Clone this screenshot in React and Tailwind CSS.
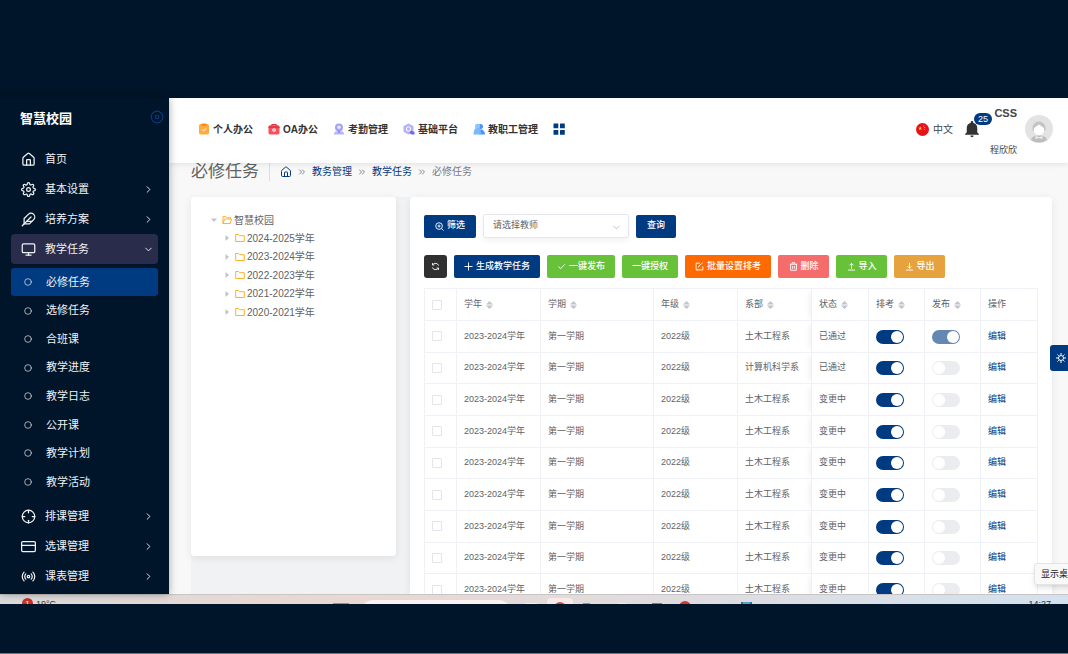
import { useState } from "react";
import { House, ChevronsRight } from "lucide-react";
import {
  FiSettings,
  FiFeather,
  FiMonitor,
  FiCrosshair,
  FiCreditCard,
  FiRadio,
  FiDisc,
  FiCircle,
  FiChevronRight,
  FiChevronDown,
} from "react-icons/fi";
import { IoMdNotifications } from "react-icons/io";

const subItems = [
  "必修任务",
  "选修任务",
  "合班课",
  "教学进度",
  "教学日志",
  "公开课",
  "教学计划",
  "教学活动",
];

const years = ["2024-2025", "2023-2024", "2022-2023", "2021-2022", "2020-2021"];

const columns = [
  { label: "学年", sortable: true },
  { label: "学期", sortable: true },
  { label: "年级", sortable: true },
  { label: "系部", sortable: true },
  { label: "状态", sortable: true },
  { label: "排考", sortable: true },
  { label: "发布", sortable: true },
  { label: "操作", sortable: false },
];

const initialRows = [
  { id: 1, dept: "土木工程系", status: "已通过", exam: true, published: true },
  { id: 2, dept: "计算机科学系", status: "已通过", exam: true, published: false },
  { id: 3, dept: "土木工程系", status: "变更中", exam: true, published: false },
  { id: 4, dept: "土木工程系", status: "变更中", exam: true, published: false },
  { id: 5, dept: "土木工程系", status: "变更中", exam: true, published: false },
  { id: 6, dept: "土木工程系", status: "变更中", exam: true, published: false },
  { id: 7, dept: "土木工程系", status: "变更中", exam: true, published: false },
  { id: 8, dept: "土木工程系", status: "变更中", exam: true, published: false },
  { id: 9, dept: "土木工程系", status: "变更中", exam: true, published: false },
];

// 10x10 line icons used inside the toolbar buttons
function LineIcon({ children, className = "size-[9px]" }) {
  return (
    <svg
      viewBox="0 0 10 10"
      fill="none"
      stroke="currentColor"
      strokeWidth="1"
      className={`${className} shrink-0`}
      aria-hidden="true"
    >
      {children}
    </svg>
  );
}

function MenuItem({ icon: Icon, label, arrow = true, active = false }) {
  const Arrow = active ? FiChevronDown : FiChevronRight;
  return (
    <a
      href="#"
      className={`flex h-[30px] items-center rounded pl-[10px] pr-1 ${
        active ? "bg-[#2a2c4b]" : ""
      }`}
    >
      <Icon size={15} strokeWidth={2} className="shrink-0" />
      <span className="ml-[9px] flex-1">{label}</span>
      {arrow && <Arrow size={11} strokeWidth={2} />}
    </a>
  );
}

function Sidebar() {
  return (
    <aside className="z-20 w-[169px] shrink-0 overflow-hidden bg-[#001529] text-[11px] text-[#f0f2f5] shadow-[0_0_8px_rgba(0,0,0,0.35)]">
      <div className="flex h-[46px] items-start justify-between pl-5 pr-[5px] pt-3">
        <h1 className="text-[13px] font-bold leading-[18px] text-white">
          智慧校园
        </h1>
        <button type="button" aria-label="收起菜单">
          <FiDisc size={14} className="text-[#003c82]" />
        </button>
      </div>
      <nav className="px-[11px]">
        <MenuItem icon={House} label="首页" arrow={false} />
        <MenuItem icon={FiSettings} label="基本设置" />
        <MenuItem icon={FiFeather} label="培养方案" />
        <MenuItem icon={FiMonitor} label="教学任务" active />
        <ul className="mb-[5px] mt-1 flex h-[228px] flex-col justify-between">
          {subItems.map((item, i) => (
            <li key={item}>
              <a
                href="#"
                className={`flex h-7 items-center rounded-[3px] pl-[13px] ${
                  i === 0 ? "bg-[#003a80]" : ""
                }`}
              >
                <FiCircle size={8} className="shrink-0" />
                <span className="ml-[14px]">{item}</span>
              </a>
            </li>
          ))}
        </ul>
        <MenuItem icon={FiCrosshair} label="排课管理" />
        <MenuItem icon={FiCreditCard} label="选课管理" />
        <MenuItem icon={FiRadio} label="课表管理" />
      </nav>
    </aside>
  );
}

function OfficeIcon() {
  return (
    <svg viewBox="0 0 12 12" className="size-3">
      <rect x="1" y="1" width="10" height="10.500" rx="1.800" fill="#ffab40" />
      <rect x="3.500" y="0.500" width="5" height="2.500" rx="1" fill="#ff8a10" />
      <path d="M4 6.500l1.500 1.500L8.200 5.500" fill="none" stroke="#fff" />
    </svg>
  );
}

function OaIcon() {
  return (
    <svg viewBox="0 0 12 12" className="size-3">
      <path d="M4 3V1.5h4V3" fill="none" stroke="#d9364a" strokeWidth="1.2" />
      <rect x="0.5" y="2.5" width="11" height="9" rx="1.8" fill="#f8505d" />
      <path d="M0.5 5v-1a1.500 1.500 0 0 1 1.500-1.500h8a1.500 1.500 0 0 1 1.500 1.500v1z" fill="#e63848" />
      <circle cx="6" cy="7" r="1.8" fill="#fff" />
      <circle cx="6" cy="7" r="0.7" fill="#f8505d" />
    </svg>
  );
}

function AttendanceIcon() {
  return (
    <svg viewBox="0 0 12 12" className="size-3">
      <path d="M2 8.500h8l1.500 3H.5z" fill="#b9b5fb" />
      <circle cx="6" cy="4.500" r="4" fill="#a6a1f8" />
      <circle cx="6" cy="4.200" r="1.800" fill="#e9e8ff" />
      <path d="M4.500 8.200h3L6 10.200z" fill="#7a72f0" />
    </svg>
  );
}

function PlatformIcon() {
  return (
    <svg viewBox="0 0 12 12" className="size-3">
      <path d="M5.500 0.500l5 2.700v5.600l-5 2.700-5-2.700V3.200z" fill="#b6b1fb" />
      <circle cx="5.500" cy="6" r="2.200" fill="none" stroke="#fff" />
      <path d="M8 7.500l3.500 1.500v2.500H8.500l-2-1.500z" fill="#6f66f0" />
    </svg>
  );
}

function StaffIcon() {
  return (
    <svg viewBox="0 0 12 12" className="size-3">
      <circle cx="7.500" cy="3.500" r="2.500" fill="#4b93f7" />
      <path d="M6 6.500h3c2 1 3 3 3 5H6z" fill="#4b93f7" />
      <circle cx="4.500" cy="3.200" r="2.500" fill="#8fc3ff" />
      <path d="M3 5h3c1.500 1 2 3 2 6.500H.5C.5 9 1 6 3 5z" fill="#7db8ff" />
    </svg>
  );
}

const topLinks = [
  { label: "个人办公", icon: OfficeIcon },
  { label: "OA办公", icon: OaIcon },
  { label: "考勤管理", icon: AttendanceIcon },
  { label: "基础平台", icon: PlatformIcon },
  { label: "教职工管理", icon: StaffIcon },
];

function Header() {
  return (
    <header className="z-10 flex h-[65px] shrink-0 items-center bg-white pb-[3px] pl-[29px] pr-[15px] shadow-[0_1px_6px_rgba(0,0,0,0.1)]">
      <nav className="flex items-center gap-[15px] text-[10px] font-bold text-[#333]">
        {topLinks.map(({ label, icon: Icon }) => (
          <a key={label} href="#" className="flex items-center gap-[3px]">
            <Icon />
            {label}
          </a>
        ))}
        <button type="button" aria-label="应用" className="text-[#003a80]">
          <svg viewBox="0 0 12 12" className="size-3" fill="currentColor">
            <rect x="0.500" y="0.500" width="4.800" height="4.800" rx="0.500" />
            <rect x="7" y="0.500" width="4.800" height="4.800" rx="0.500" />
            <rect x="0.500" y="7" width="4.800" height="4.800" rx="0.500" />
            <rect x="7" y="7" width="4.800" height="4.800" rx="0.500" />
          </svg>
        </button>
      </nav>
      <div className="ml-auto flex items-center text-[#444]">
        <button type="button" className="flex items-center gap-[4px] text-[10px]">
          <svg viewBox="0 0 14 14" className="size-[13px]">
            <circle cx="7" cy="7" r="7" fill="#e8111b" />
            <path d="M4.500 3.500l.6 1.500h1.600l-1.300 1 .5 1.500-1.400-.9-1.400.9.5-1.500-1.300-1h1.600z" fill="#ffd53a" />
            <circle cx="8.200" cy="3.300" r="0.600" fill="#ffd53a" />
            <circle cx="9.300" cy="4.800" r="0.600" fill="#ffd53a" />
            <circle cx="9" cy="6.700" r="0.600" fill="#ffd53a" />
          </svg>
          中文
        </button>
        <button type="button" aria-label="通知" className="relative ml-[9px]">
          <IoMdNotifications size={20} className="text-[#333]" />
          <span className="absolute -top-[6px] left-3 rounded-full bg-[#003a80] px-1 text-[9px] leading-3 text-white">
            25
          </span>
        </button>
        <div className="ml-[8px] mt-[3px] flex h-[51px] w-[27px] flex-col items-end justify-between">
          <span className="text-[11px] font-bold leading-4">CSS</span>
          <span className="text-[9px] leading-3">程欣欣</span>
        </div>
        <svg viewBox="0 0 28 28" className="ml-[8px] size-7" role="img" aria-label="头像">
          <circle cx="14" cy="14" r="14" fill="#e3e3e3" />
          <path d="M7.500 13a6.500 6.500 0 0 1 13 0v2.500h-13z" fill="#c4c4c4" />
          <path d="M9 13l5-3.500 5 3.500v2.500a5 5 0 0 1-10 0z" fill="#fff" />
          <path d="M6 25c1-3.500 4-4.500 8-4.500s7 1 8 4.500a14 14 0 0 1-16 0z" fill="#bdbdbd" />
          <path d="M10.500 21l3.500 1.200 3.500-1.200v3L14 23l-3.500 1z" fill="#eee" />
        </svg>
      </div>
    </header>
  );
}

function Breadcrumb() {
  const sep = <ChevronsRight size={10} className="text-[#6e6b7b]" />;
  return (
    <div className="flex h-[17px] items-center text-[10px]">
      <h2 className="border-r border-[#dcdde1] pr-[10px] text-[17px] leading-[18px] text-[#636363]">
        必修任务
      </h2>
      <nav className="ml-[10px] flex items-center gap-[5px] text-[#003a80]">
        <a href="#" aria-label="首页">
          <House size={12} />
        </a>
        {sep}
        <a href="#">教务管理</a>
        {sep}
        <a href="#">教学任务</a>
        {sep}
        <span className="text-[#7d7a88]">必修任务</span>
      </nav>
    </div>
  );
}

function Tree() {
  return (
    <section className="h-[359px] w-[205px] shrink-0 rounded-[3px] bg-white pl-5 pt-[14px] text-[10px] text-[#606266] shadow-[0_2px_8px_rgba(0,0,0,0.08)]">
      <div className="flex h-[18px] items-center">
        <svg viewBox="0 0 6 6" className="mr-[5px] size-[6px] fill-[#c0c4cc]">
          <path d="M0 1.500h6L3 5z" />
        </svg>
        <LineIcon className="mr-[2px] size-[10px] text-[#ffb12b]">
          <path d="M1 8.500V1.500h2.800l1 1.200H8.500V4M1 8.500L2.500 4h7L8.300 8.500z" />
        </LineIcon>
        智慧校园
      </div>
      <ul className="flex h-[92px] flex-col justify-between pl-[13px]">
        {years.map((y) => (
          <li key={y} className="flex h-[18px] items-center">
            <svg viewBox="0 0 6 6" className="mr-[5px] size-[6px] fill-[#c0c4cc]">
              <path d="M1.500 0v6L5 3z" />
            </svg>
            <LineIcon className="mr-[2px] size-[10px] text-[#ffb12b]">
              <path d="M.7 8.500v-7h3l1 1.200h4.600v5.800z" />
            </LineIcon>
            {y}学年
          </li>
        ))}
      </ul>
    </section>
  );
}

function Button({ className, children }) {
  return (
    <button
      type="button"
      className={`flex h-[23px] items-center justify-center gap-[3px] rounded-[2px] px-[10px] font-medium text-white ${className}`}
    >
      {children}
    </button>
  );
}

function Toolbar() {
  return (
    <div className="text-[9px]">
      <div className="flex items-center gap-[7px]">
        <Button className="min-w-[52px] bg-[#003a80]">
          <LineIcon>
            <circle cx="4.500" cy="4.500" r="3.700" />
            <path d="M7.200 7.200L9.500 9.500M2.800 4.500h3.400M4.500 2.800v3.400" />
          </LineIcon>
          筛选
        </Button>
        <div className="relative w-[146px]">
          <select
            aria-label="教师"
            className="h-6 w-full appearance-none rounded-[2px] border border-[#e4e7ed] bg-white px-[9px] text-[#606266] shadow-[0_3px_6px_rgba(0,0,0,0.05)]"
          >
            <option>请选择教师</option>
          </select>
          <FiChevronDown
            size={11}
            strokeWidth={1.5}
            className="pointer-events-none absolute right-[7px] top-[8px] text-[#a8abb2]"
          />
        </div>
        <Button className="min-w-[40px] bg-[#003a80]">查询</Button>
      </div>
      <div className="mt-[17px] flex items-center gap-[7px]">
        <button
          type="button"
          aria-label="刷新"
          className="flex size-[23px] items-center justify-center rounded-[3px] bg-[#303030] text-white"
        >
          <LineIcon>
            <path d="M8.500 4A3.700 3.700 0 0 0 2 3M1.500 6A3.700 3.700 0 0 0 8 7M1.700 1.200V3.300H3.800M8.300 8.800V6.700H6.200" />
          </LineIcon>
        </button>
        <Button className="bg-[#003a80]">
          <LineIcon>
            <path d="M5 .5v9M.5 5h9" />
          </LineIcon>
          生成教学任务
        </Button>
        <Button className="bg-[#67c23a]">
          <LineIcon>
            <path d="M1.500 5l2.500 2.500L8.800 2.500" />
          </LineIcon>
          一键发布
        </Button>
        <Button className="bg-[#67c23a]">一键授权</Button>
        <Button className="bg-[#ff6a00]">
          <LineIcon>
            <path d="M5.500 1.300H1.200v7.500h7.500V5M4 6l.3-1.500L8.500.8" />
          </LineIcon>
          批量设置排考
        </Button>
        <Button className="min-w-[51px] bg-[#f56c6c]">
          <LineIcon>
            <path d="M.8 2.500h8.400M3.500 2.300V.8h3v1.500M1.800 2.500v6.700h6.400V2.500M4 4.500v3M6 4.500v3" />
          </LineIcon>
          删除
        </Button>
        <Button className="min-w-[51px] bg-[#67c23a]">
          <LineIcon>
            <path d="M1 9h8M5 7.500V1.500M2.800 3.700L5 1.500l2.200 2.200" />
          </LineIcon>
          导入
        </Button>
        <Button className="min-w-[51px] bg-[#e6a23c]">
          <LineIcon>
            <path d="M1 9h8M5 1v6M2.800 4.800L5 7l2.200-2.200" />
          </LineIcon>
          导出
        </Button>
      </div>
    </div>
  );
}

function Switch({ label, checked, disabled, onChange }) {
  return (
    <input
      type="checkbox"
      role="switch"
      aria-label={label}
      checked={checked}
      disabled={disabled}
      onChange={onChange}
      className="block h-[14px] w-7 appearance-none rounded-full bg-[#ebecf0] before:m-[1px] before:block before:size-3 before:rounded-full before:bg-white checked:bg-[#003a80] checked:before:ml-[15px] disabled:opacity-60"
    />
  );
}

function CheckBox({ label }) {
  return (
    <input
      type="checkbox"
      aria-label={label}
      className="block size-[10px] appearance-none rounded-[1px] border border-[#e2e5eb] bg-white checked:bg-[#003a80]"
    />
  );
}

function TaskTable() {
  const [rows, setRows] = useState(initialRows);

  const toggle = (id, key) => {
    setRows(rows.map((r) => (r.id === id ? { ...r, [key]: !r[key] } : r)));
  };

  const cell = "border border-[#eff1f6] p-0 pl-[7px]";
  const fixed = "shadow-[-5px_0_6px_-3px_rgba(0,0,0,0.07)]";

  return (
    <table className="mt-[10px] h-[318px] w-full table-fixed border-collapse text-left text-[9px] text-[#606266]">
      <colgroup>
        <col className="w-[32px]" />
        <col className="w-[84px]" />
        <col className="w-[113px]" />
        <col className="w-[84px]" />
        <col className="w-[74px]" />
        <col className="w-[57px]" />
        <col className="w-[56px]" />
        <col className="w-[56px]" />
        <col className="w-[57px]" />
      </colgroup>
      <thead>
        <tr className="h-[32px]">
          <th className={cell}>
            <CheckBox label="全选" />
          </th>
          {columns.map((c) => (
            <th
              key={c.label}
              className={`${cell} font-normal ${c.label === "状态" ? fixed : ""}`}
            >
              <span className="flex items-center gap-[4px]">
                {c.label}
                {c.sortable && (
                  <svg viewBox="0 0 7 8" className="h-2 w-[7px] fill-[#c0c4cc]">
                    <path d="M0 3.500h7L3.500 0zM0 4.500h7L3.500 8z" />
                  </svg>
                )}
              </span>
            </th>
          ))}
        </tr>
      </thead>
      <tbody>
        {rows.map((r) => (
          <tr key={r.id} className="h-[31px]">
            <td className={cell}>
              <CheckBox label={`选择第${r.id}行`} />
            </td>
            <td className={cell}>2023-2024学年</td>
            <td className={cell}>第一学期</td>
            <td className={cell}>2022级</td>
            <td className={cell}>{r.dept}</td>
            <td className={`${cell} ${fixed}`}>{r.status}</td>
            <td className={`${cell} pt-[1px]`}>
              <Switch
                label="排考"
                checked={r.exam}
                onChange={() => toggle(r.id, "exam")}
              />
            </td>
            <td className={`${cell} pt-[1px]`}>
              <Switch
                label="发布"
                checked={r.published}
                disabled={r.published}
                onChange={() => toggle(r.id, "published")}
              />
            </td>
            <td className={cell}>
              <a href="#" className="text-[#003a80]">
                编辑
              </a>
            </td>
          </tr>
        ))}
      </tbody>
    </table>
  );
}

function Taskbar() {
  return (
    <footer className="flex h-[10px] shrink-0 items-start overflow-hidden border-t border-[#c9c5c5] bg-linear-to-r from-[#dcdcdc] via-[#ead7d1] via-30% to-[#d3e2ef] pl-[22px] pr-[17px] text-[9px] leading-3 text-[#333]">
      <span className="mt-[3px] size-[11px] shrink-0 rounded-full bg-[#cf2e23] text-center text-[8px] text-white">
        1
      </span>
      <span className="ml-[3px] mt-[3px]">19°C</span>
      <span className="ml-auto mt-2 h-3 w-4 bg-[#4aa5de]" />
      <span className="ml-3 mt-[5px] h-3 w-[150px] rounded-t-full bg-[#faf3f1]" />
      <span className="ml-[14px] mt-2 h-3 w-3 bg-[#f6efed]" />
      <span className="ml-[10px] mt-[3px] flex h-3 w-[26px] justify-center rounded-t bg-[#f5ebe8] pt-1">
        <span className="size-3 rounded-full bg-[#ea4336]" />
      </span>
      <span className="ml-[10px] mt-2 h-3 w-[7px] bg-[#c98a1a]" />
      <span className="ml-[28px] mt-2 h-3 w-[9px] bg-[#efe9ea]" />
      <span className="ml-[25px] mt-2 h-3 w-[10px] bg-[#e0524b]" />
      <span className="ml-[17px] mt-[6px] size-3 rounded-full bg-[#e0352b]" />
      <span className="ml-[50px] mt-[7px] h-3 w-[11px] border-x-2 border-[#1d7ba0] bg-[#5da3bd]" />
      <span className="ml-auto mt-[3px]">14:27</span>
    </footer>
  );
}

export default function App() {
  return (
    <div className="relative flex h-screen flex-col overflow-hidden border-b border-[#6b7785] bg-[#001529] pb-[49px] pt-[98px] font-['Liberation_Sans','Noto_Sans_CJK_SC',sans-serif]">
      <div className="flex min-h-0 flex-1">
        <Sidebar />
        <div className="flex min-w-0 flex-1 flex-col bg-[#f8f8f8]">
          <Header />
          <main className="flex min-h-0 flex-1 flex-col overflow-hidden pl-[22px] pr-4">
            <Breadcrumb />
            <div className="mt-[17px] flex min-h-0 flex-1 items-start gap-[14px] bg-[#f1f2f4]">
              <Tree />
              <section className="min-w-0 flex-1 self-stretch rounded-t-[3px] bg-white pl-[14px] pr-4 pt-[17px] shadow-[0_2px_8px_rgba(0,0,0,0.08)]">
                <Toolbar />
                <TaskTable />
              </section>
            </div>
          </main>
        </div>
      </div>
      <Taskbar />
      <button
        type="button"
        aria-label="主题设置"
        className="absolute right-0 top-[345px] z-20 flex h-[26px] w-[18px] items-center rounded-l-[3px] bg-[#003a80] pl-[6px] text-white"
      >
        <LineIcon className="size-[10px]">
          <circle cx="5" cy="5" r="2.500" />
          <path d="M5 0v2M5 8v2M0 5h2M8 5h2M1.500 1.500l1.300 1.300M7.200 7.200l1.300 1.300M1.500 8.500l1.300-1.300M7.200 2.800l1.300-1.300" />
        </LineIcon>
      </button>
      <div
        role="tooltip"
        className="absolute -right-4 top-[563px] z-20 whitespace-nowrap rounded-[3px] border border-[#e3e3e3] bg-[#f9f9f9] px-[6px] py-1 text-[9px] leading-3 text-[#222] shadow-md"
      >
        显示桌面
      </div>
    </div>
  );
}
